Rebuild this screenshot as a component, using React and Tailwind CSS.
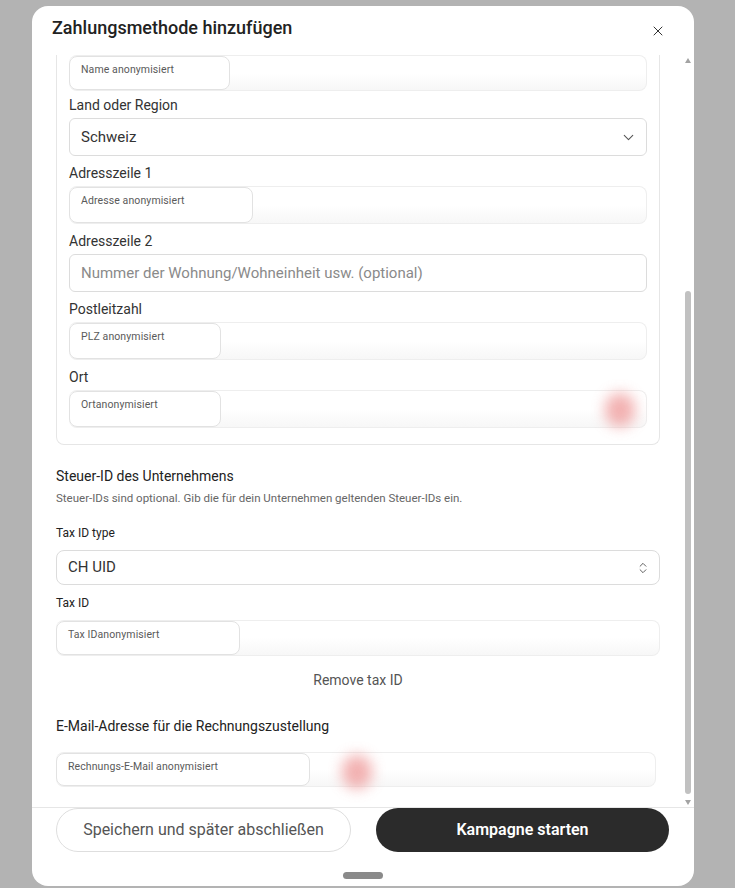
import React from "react";
import { X, ChevronDown, ChevronsUpDown } from "lucide-react";

const AnonField = ({ label, boxW, h = "h-[38px]", blob }) => {
  return (
    <div
      className={`relative flex ${h} w-full rounded-lg border border-l-0 border-[#eeeeee] bg-gradient-to-b from-white via-white to-[#f7f7f7]`}
    >
      <div
        className="h-full shrink-0 rounded-lg border border-[#e2e2e2] bg-white pl-[11px] pt-[6px] text-[10.5px] leading-[14px] text-[#5a5a5a] tracking-[0.1px]"
        style={{ width: boxW }}
      >
        {label}
      </div>
      {blob && (
        <div
          className="absolute top-[2px] h-[34px] w-[30px] rounded-full bg-[#ee9797] opacity-75 blur-[7px]"
          style={{ left: blob }}
        />
      )}
    </div>
  );
};

const Label = ({ children, className = "" }) => (
  <div className={`h-[20px] text-[14px] leading-[20px] text-[#333] ${className}`}>
    {children}
  </div>
);

const App = () => {
  return (
    <div className="min-h-[888px] w-full bg-[#b3b3b3] pt-[6px] font-['Roboto','Noto_Sans',sans-serif]">
      <div className="ml-[32px] flex h-[880px] w-[662px] flex-col overflow-hidden rounded-[16px] bg-white">
        {/* header */}
        <div className="flex h-[49px] shrink-0 justify-between pl-5 pr-[28px]">
          <h1 className="mt-[10px] text-[18px] font-medium leading-[24px] text-[#222]">
            Zahlungsmethode hinzufügen
          </h1>
          <button className="mt-[17px] h-4 w-4 text-[#333]">
            <X size={16} strokeWidth={1.5} />
          </button>
        </div>

        {/* scroll area */}
        <div className="flex h-[752px] shrink-0">
          <div className="flex-1 overflow-hidden pl-[24px] pr-[22px]">
            <div className="rounded-b-lg border border-t-0 border-[#e6e6e6] px-[12px] pb-[16px]">
              <AnonField label="Name anonymisiert" boxW={161} h="h-[36px]" />
              <Label className="mt-[4px]">Land oder Region</Label>
              <div className="mt-[3px] flex h-[38px] items-center justify-between rounded-md border border-[#dcdcdc] pl-[11px] pr-[9px] text-[15px] text-[#333]">
                <span>Schweiz</span>
                <ChevronDown size={17} strokeWidth={1.5} className="text-[#555]" />
              </div>

              <Label className="mt-[7px]">Adresszeile 1</Label>
              <div className="mt-[3px]">
                <AnonField label="Adresse anonymisiert" boxW={184} />
              </div>

              <Label className="mt-[7px]">Adresszeile 2</Label>
              <div className="mt-[3px] flex h-[38px] items-center rounded-md border border-[#dcdcdc] pl-[11px] text-[15px] text-[#8a8a8a]">
                Nummer der Wohnung/Wohneinheit usw. (optional)
              </div>

              <Label className="mt-[7px]">Postleitzahl</Label>
              <div className="mt-[3px]">
                <AnonField label="PLZ anonymisiert" boxW={152} />
              </div>

              <Label className="mt-[7px]">Ort</Label>
              <div className="mt-[3px]">
                <AnonField label="Ortanonymisiert" boxW={152} blob={536} />
              </div>
            </div>

            <div className="mt-[21px] h-[20px] text-[14px] leading-[20px] text-[#222]">
              Steuer-ID des Unternehmens
            </div>
            <p className="mt-[4px] h-[16px] text-[11.5px] leading-[16px] text-[#666]">
              Steuer-IDs sind optional. Gib die für dein Unternehmen geltenden Steuer-IDs ein.
            </p>

            <div className="mt-[19px] h-[16px] text-[12px] leading-[16px] text-[#222]">
              Tax ID type
            </div>
            <div className="mt-[9px] flex h-[35px] items-center justify-between rounded-lg border border-[#dcdcdc] pl-[11px] pr-[9px] text-[15px] text-[#333]">
              <span>CH UID</span>
              <ChevronsUpDown size={14} strokeWidth={1.6} className="text-[#555]" />
            </div>

            <div className="mt-[10px] h-[16px] text-[12px] leading-[16px] text-[#222]">
              Tax ID
            </div>
            <div className="mt-[9px]">
              <AnonField label="Tax IDanonymisiert" boxW={184} h="h-[36px]" />
            </div>

            <div className="mt-[14px] h-[20px] text-center text-[14px] leading-[20px] text-[#555]">
              Remove tax ID
            </div>

            <div className="mt-[26px] h-[20px] text-[14px] leading-[20px] text-[#222]">
              E-Mail-Adresse für die Rechnungszustellung
            </div>
            <div className="mt-[16px] pr-[4px]">
              <AnonField label="Rechnungs-E-Mail anonymisiert" boxW={254} h="h-[35px]" blob={286} />
            </div>
          </div>

          {/* scrollbar */}
          <div className="flex w-[12px] shrink-0 flex-col items-center pb-[2px] pt-[3px]">
            <div className="h-0 w-0 border-x-[3px] border-b-[5px] border-x-transparent border-b-[#a3a3a3]" />
            <div className="mt-auto h-[503px] w-[6px] rounded-full bg-[#c1c1c1]" />
            <div className="mt-[6px] h-0 w-0 border-x-[3px] border-t-[5px] border-x-transparent border-t-[#a3a3a3]" />
          </div>
        </div>

        {/* footer */}
        <div className="shrink-0 border-t border-[#e6e6e6]">
          <div className="flex gap-[25px] pl-[24px] pr-[25px]">
            <button className="h-[44px] flex-1 rounded-full border border-[#dedede] bg-white text-[16px] text-[#555]">
              Speichern und später abschließen
            </button>
            <button className="h-[44px] flex-1 rounded-full bg-[#2b2b2b] text-[16px] font-semibold text-white">
              Kampagne starten
            </button>
          </div>
          <div className="mt-[20px] flex justify-center">
            <div className="h-[7px] w-[40px] rounded-full bg-[#8a8a8a]" />
          </div>
        </div>
      </div>
    </div>
  );
};

export default App;
